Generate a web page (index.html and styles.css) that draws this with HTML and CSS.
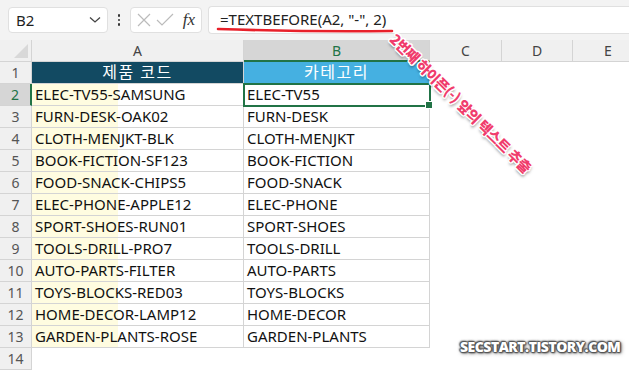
FILE: index.html
```html
<!DOCTYPE html>
<html lang="ko">
<head>
    <meta charset="UTF-8">
    <title>TEXTBEFORE</title>
    <link rel="stylesheet" href="styles.css">
</head>
<body>
    <div class="sheet">
        <!-- formula bar -->
        <header class="toolbar">
            <div class="name-box">
                <span>B2</span>
                <svg width="12" height="8" viewBox="0 0 12 8"><path d="M1 1.5 L6 6 L11 1.5" fill="none" stroke="#444" stroke-width="1.3"/></svg>
            </div>
            <div class="dots"><i></i><i></i><i></i></div>
            <div class="fx-box">
                <svg width="16" height="16" viewBox="0 0 16 16"><path d="M2 2 L14 14 M14 2 L2 14" stroke="#bbb" stroke-width="1.2"/></svg>
                <svg width="18" height="16" viewBox="0 0 18 16"><path d="M1 8 L6 13 L17 2" fill="none" stroke="#bbb" stroke-width="1.2"/></svg>
                <span class="fx">fx</span>
            </div>
            <div class="formula">=TEXTBEFORE(A2, "-", 2)</div>
        </header>

        <div class="grid">
            <div class="col-head">
                <div class="corner"></div>
                <div>A</div>
                <div class="selected">B</div>
                <div>C</div>
                <div>D</div>
                <div>E</div>
            </div>

            <div class="row">
                <div class="num">1</div>
                <div class="cell title dark">제품 코드</div>
                <div class="cell title light">카테고리</div>
            </div>
            <div class="row">
                <div class="num active">2</div>
                <div class="cell code">ELEC-TV55-SAMSUNG</div>
                <div class="cell current">ELEC-TV55</div>
            </div>
            <div class="row">
                <div class="num">3</div>
                <div class="cell code">FURN-DESK-OAK02</div>
                <div class="cell">FURN-DESK</div>
            </div>
            <div class="row">
                <div class="num">4</div>
                <div class="cell code">CLOTH-MENJKT-BLK</div>
                <div class="cell">CLOTH-MENJKT</div>
            </div>
            <div class="row">
                <div class="num">5</div>
                <div class="cell code">BOOK-FICTION-SF123</div>
                <div class="cell">BOOK-FICTION</div>
            </div>
            <div class="row">
                <div class="num">6</div>
                <div class="cell code">FOOD-SNACK-CHIPS5</div>
                <div class="cell">FOOD-SNACK</div>
            </div>
            <div class="row">
                <div class="num">7</div>
                <div class="cell code">ELEC-PHONE-APPLE12</div>
                <div class="cell">ELEC-PHONE</div>
            </div>
            <div class="row">
                <div class="num">8</div>
                <div class="cell code">SPORT-SHOES-RUN01</div>
                <div class="cell">SPORT-SHOES</div>
            </div>
            <div class="row">
                <div class="num">9</div>
                <div class="cell code">TOOLS-DRILL-PRO7</div>
                <div class="cell">TOOLS-DRILL</div>
            </div>
            <div class="row">
                <div class="num">10</div>
                <div class="cell code">AUTO-PARTS-FILTER</div>
                <div class="cell">AUTO-PARTS</div>
            </div>
            <div class="row">
                <div class="num">11</div>
                <div class="cell code">TOYS-BLOCKS-RED03</div>
                <div class="cell">TOYS-BLOCKS</div>
            </div>
            <div class="row">
                <div class="num">12</div>
                <div class="cell code">HOME-DECOR-LAMP12</div>
                <div class="cell">HOME-DECOR</div>
            </div>
            <div class="row">
                <div class="num">13</div>
                <div class="cell code">GARDEN-PLANTS-ROSE</div>
                <div class="cell">GARDEN-PLANTS</div>
            </div>
            <div class="row empty">
                <div class="num">14</div>
            </div>
        </div>

        <!-- annotations -->
        <svg class="underline" width="180" height="8" viewBox="0 0 180 8"><path d="M2 3 Q 90 6 176 5" fill="none" stroke="#e8202a" stroke-width="2.6" stroke-linecap="round"/></svg>
        <div class="note">2번째 하이픈(-) 앞의 텍스트 추출</div>
        <div class="watermark">SECSTART.TISTORY.COM</div>
    </div>
</body>
</html>
```

FILE: styles.css
```css
html, body {
    margin: 0;
    padding: 0;
}

body {
    background: #fff;
    font-family: "Noto Sans", "Noto Sans CJK KR", sans-serif;
    color: #1f1f1f;
}

.sheet {
    position: relative;
    width: 629px;
    height: 375px;
    overflow: hidden;
}

/* formula bar */

.toolbar {
    display: flex;
    align-items: center;
    height: 40px;
    padding-left: 8px;
    background: #f3f3f3;
    box-sizing: border-box;
}

.name-box {
    display: flex;
    align-items: center;
    justify-content: space-between;
    width: 100px;
    height: 26px;
    padding: 0 6px 0 7px;
    box-sizing: border-box;
    background: #fff;
    border: 1px solid #e0e0e0;
    border-radius: 4px;
    font-size: 15px;
}

.dots {
    display: flex;
    flex-direction: column;
    gap: 2px;
    width: 22px;
    align-items: center;
}

.dots i {
    width: 2.5px;
    height: 2.5px;
    background: #333;
    border-radius: 50%;
}

.fx-box {
    display: flex;
    align-items: center;
    gap: 4px;
    width: 72px;
    height: 26px;
    padding: 0 6px 0 5px;
    box-sizing: border-box;
    background: #fff;
    border: 1px solid #e0e0e0;
    border-radius: 4px;
}

.fx {
    margin-left: auto;
    font-family: "Liberation Serif", serif;
    font-style: italic;
    font-size: 17px;
    color: #333;
}

.formula {
    flex: 1;
    height: 26px;
    margin-left: 6px;
    padding-left: 11px;
    background: #fff;
    border: 1px solid #e0e0e0;
    border-right: none;
    border-radius: 4px 0 0 4px;
    font-size: 15px;
    line-height: 25px;
    color: #222;
}

/* grid */

.col-head {
    display: grid;
    grid-template-columns: 32px 212px 186px 72px 71px 71px;
    height: 22px;
    background: #f0f0f0;
    font-size: 14px;
    color: #444;
}

.col-head div {
    display: flex;
    align-items: center;
    justify-content: center;
    border-right: 1px solid #d4d4d4;
    border-bottom: 1px solid #d4d4d4;
    box-sizing: border-box;
}

.col-head .corner {
    position: relative;
}

.col-head .corner::after {
    content: "";
    position: absolute;
    right: 3px;
    bottom: 3px;
    border-left: 14px solid transparent;
    border-bottom: 14px solid #d8d8d8;
}

.col-head .selected {
    background: #d6d6d6;
    color: #217346;
    border-bottom: 2px solid #217346;
}

.row {
    display: grid;
    grid-template-columns: 32px 212px 186px;
    height: 22px;
}

.num {
    display: flex;
    align-items: center;
    justify-content: center;
    background: #f0f0f0;
    border-right: 1px solid #d4d4d4;
    border-bottom: 1px solid #d4d4d4;
    box-sizing: border-box;
    font-size: 14px;
    color: #555;
}

.num.active {
    background: #d6d6d6;
    color: #217346;
    border-right: 2px solid #217346;
}

.cell {
    padding-left: 3px;
    border-right: 1px solid #d4d4d4;
    border-bottom: 1px solid #d4d4d4;
    box-sizing: border-box;
    font-size: 15px;
    line-height: 21px;
    white-space: nowrap;
    color: #111;
}

.cell.code {
    background: linear-gradient(to right, #fffce0 86px, #fff 86px);
}

.cell.title {
    padding: 0;
    text-align: center;
    color: #fff;
    font-size: 16px;
    letter-spacing: 1.5px;
}

.cell.dark {
    background: #124a62;
}

.cell.light {
    background: #45b0e1;
}

.cell.current {
    position: relative;
    outline: 2px solid #217346;
    outline-offset: -1px;
}

.cell.current::after {
    content: "";
    position: absolute;
    right: -4px;
    bottom: -4px;
    width: 6px;
    height: 6px;
    background: #217346;
    border: 1px solid #fff;
}

/* annotations */

.underline {
    position: absolute;
    left: 216px;
    top: 26px;
}

.note {
    position: absolute;
    left: 366px;
    top: 92px;
    transform: rotate(44.5deg);
    font-family: "Noto Sans CJK KR", sans-serif;
    font-weight: 900;
    font-size: 14.5px;
    letter-spacing: -0.6px;
    white-space: nowrap;
    color: #f03c6c;
    text-shadow:
        1.5px 0 0 #fff, -1.5px 0 0 #fff, 0 1.5px 0 #fff, 0 -1.5px 0 #fff,
        1px 1px 0 #fff, -1px -1px 0 #fff, 1px -1px 0 #fff, -1px 1px 0 #fff,
        2px 2px 3px rgba(0, 0, 0, 0.5);
}

.watermark {
    position: absolute;
    left: 460px;
    top: 337px;
    font-family: "Open Sans", sans-serif;
    font-weight: 800;
    font-size: 14px;
    letter-spacing: -0.5px;
    color: #fff;
    text-shadow:
        1px 0 1px #555, -1px 0 1px #555, 0 1px 1px #555, 0 -1px 1px #555,
        1px 1px 2px #444, -1px -1px 2px #444, 1px 1px 4px #666;
}
```
